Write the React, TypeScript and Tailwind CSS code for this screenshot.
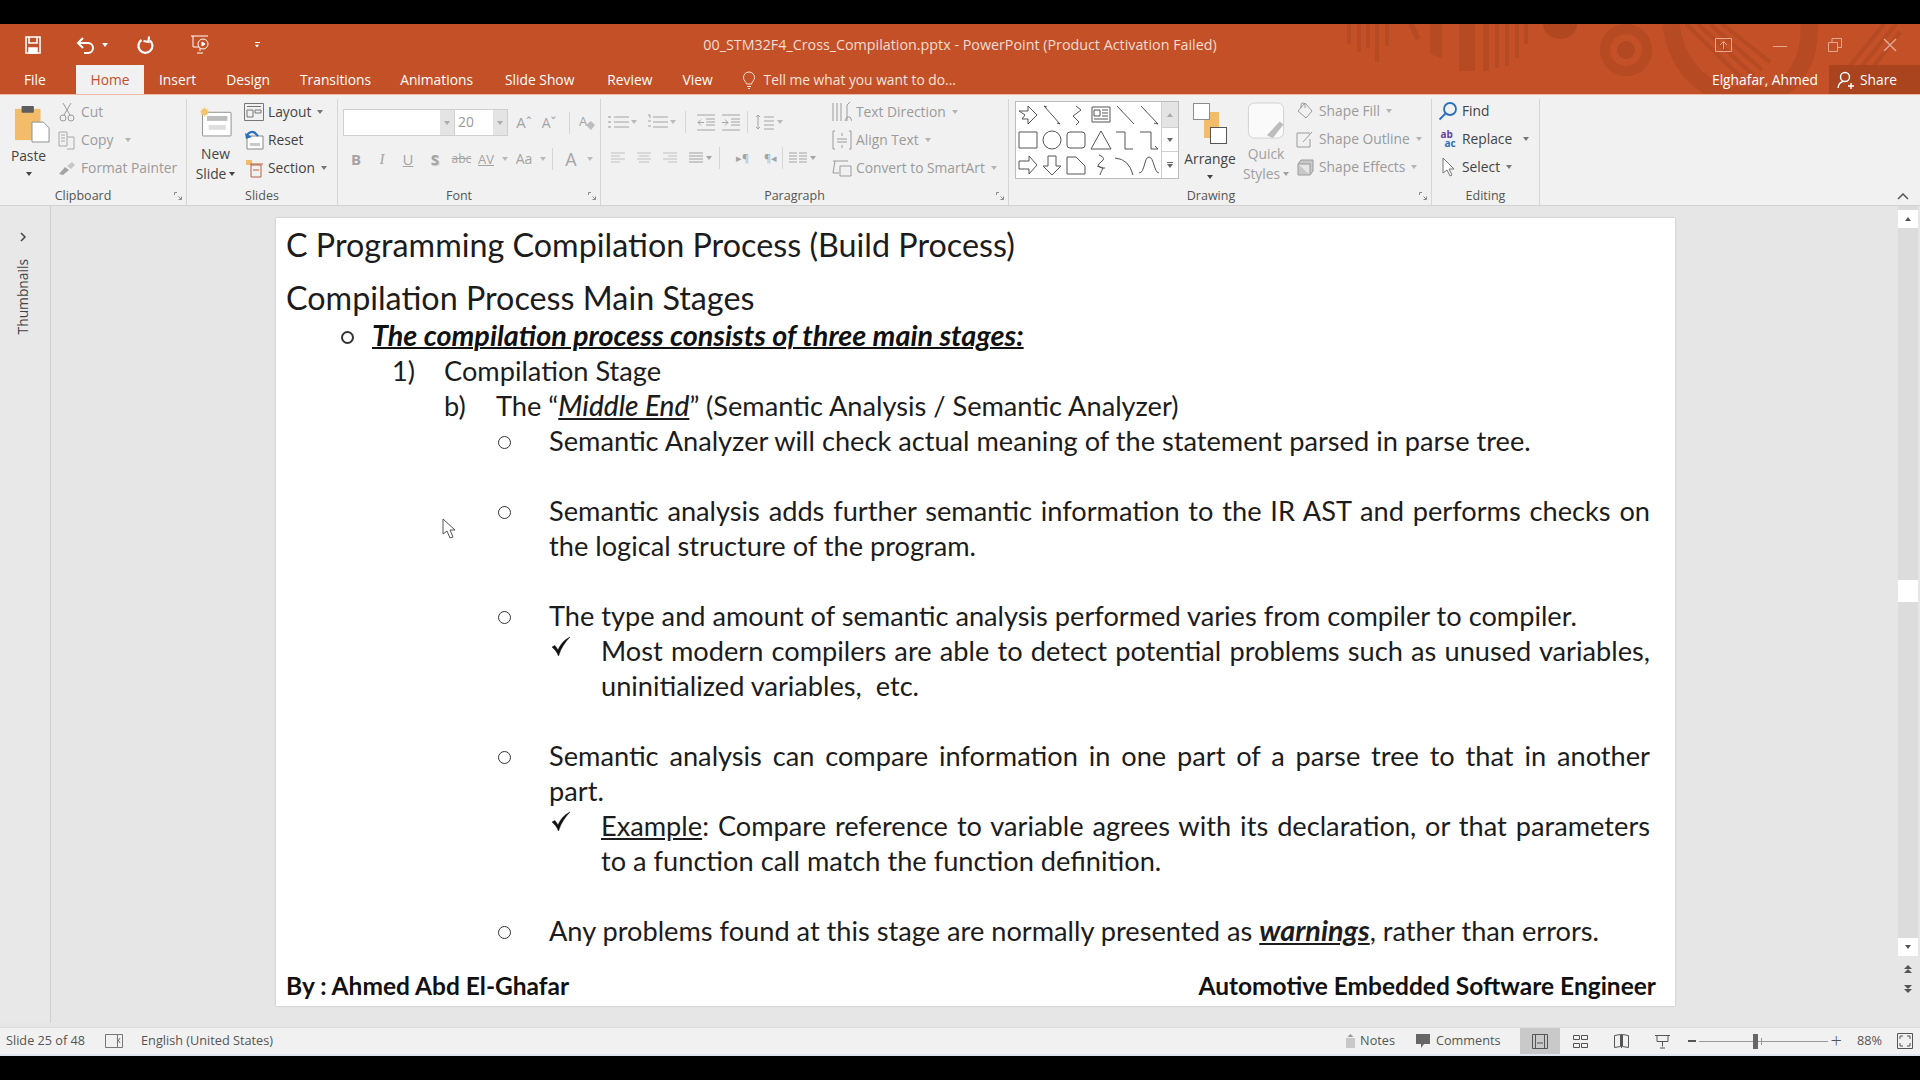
import type { ReactNode } from "react";

const uiFont = "font-['Open_Sans',sans-serif]";
const slideFont = "font-['Lato',sans-serif]";

const Caret = ({ className = "" }: { className?: string }) => (
  <svg width="6" height="4" viewBox="0 0 6 4" className={`shrink-0 ${className}`}>
    <path d="M0 0h6L3 4z" fill="currentColor" />
  </svg>
);

const Ico = ({ children, w = 18, h = 18, vb = "0 0 18 18", className = "" }: { children: ReactNode; w?: number; h?: number; vb?: string; className?: string }) => (
  <svg width={w} height={h} viewBox={vb} fill="none" stroke="currentColor" strokeWidth="1" className={`shrink-0 ${className}`}>
    {children}
  </svg>
);

const Launcher = () => (
  <svg width="8" height="8" viewBox="0 0 8 8" fill="none" stroke="#8a8a8a" strokeWidth="1">
    <path d="M.5 3V.5H3M7.5 7.5l-3-3M4.5 7.5h3v-3" />
  </svg>
);

// ribbon group with caption at the bottom
const Group = ({ label, width, launcher, captionPad = "", children }: { label: string; width: string; launcher?: boolean; captionPad?: string; children: ReactNode }) => (
  <div className={`${width} h-full shrink-0 flex flex-col border-r border-[#d6d6d6]`}>
    <div className="flex-1 flex min-h-0">{children}</div>
    <div className={`h-[21px] relative flex items-center justify-center text-[12.5px] text-[#555] pt-[4px] ${captionPad}`}>
      {label}
      {launcher && (
        <span className="absolute right-[4px] top-[8px] flex">
          <Launcher />
        </span>
      )}
    </div>
  </div>
);

const SmallBtn = ({ icon, label, caret, caretGap = "ml-[2px]", color = "text-[#9b9b9b]" }: { icon: ReactNode; label: string; caret?: boolean; caretGap?: string; color?: string }) => (
  <div className={`h-[28px] flex items-center gap-[4px] text-[13.8px] leading-none whitespace-nowrap ${color}`}>
    <span className="w-[20px] flex justify-center">{icon}</span>
    <span>{label}</span>
    {caret && <Caret className={`opacity-70 ${caretGap}`} />}
  </div>
);

const QuickAccess = () => (
  <div className="flex items-center text-white pl-[24px]">
    <Ico w={18} h={20} vb="0 0 18 20" className="stroke-[1.6]">
      <path d="M2 2h14v16H2zM5 2v6h8V2" />
      <path d="M5 13h8v5H5z" fill="white" />
    </Ico>
    <div className="flex items-center gap-[6px] ml-[34px]">
      <Ico w={20} h={18} vb="0 0 20 18" className="stroke-2">
        <path d="M7 2 2 7l5 5M2 7h10a5 5 0 0 1 0 10H8" />
      </Ico>
      <Caret />
    </div>
    <Ico w={20} h={20} vb="0 0 20 20" className="stroke-[2.2] ml-[27px]">
      <path d="M6.500 5a7 7 0 1 0 8.500.5" />
      <path d="M14 1.500l-.5 5.500-5-1" />
    </Ico>
    <Ico w={22} h={22} vb="0 0 22 22" className="ml-[34px]">
      <path d="M2 2h17M4 2v11h13M11 13v4M8 19h6" />
      <circle cx="14" cy="10" r="5" fill="#c35027" />
      <path d="M13 8l3 2-3 2z" fill="white" />
    </Ico>
    <div className="flex flex-col items-center ml-[43px] gap-[1px]">
      <div className="w-[5px] h-px bg-white" />
      <Caret className="scale-75" />
    </div>
  </div>
);

const TitlePattern = () => (
  <svg width="620" height="71" viewBox="0 0 620 71" className="absolute right-0 top-0 pointer-events-none" fill="none" stroke="#a9441f" strokeOpacity="0.5">
    <path d="M49 0v20M59 0v28M68 0v24M77 0v38M87 0v22" strokeWidth="4" />
    <path d="M111 0l7 15" strokeWidth="5" />
    <path d="M130 0h12v34l-12-4zM159 0h16v47h-16zM183 0h6v47h-6zM195 0h4v44h-4zM205 0h4v42h-4zM215 0h4v34h-4zM224 0h4v20h-4z" fill="#a9441f" fillOpacity="0.5" stroke="none" />
    <path d="M243 0a17 15 0 0 0 34 0z" fill="#a9441f" fillOpacity="0.75" stroke="none" />
    <circle cx="326" cy="26" r="21" strokeWidth="10" />
    <circle cx="326" cy="26" r="9" fill="#a9441f" fillOpacity="0.6" stroke="none" />
    <path d="M371 0c5 42 30 62 55 71h45c28-14 40-40 38-71" strokeWidth="17" />
    <path d="M386 0l58 56M398 0l56 52M410 0l52 46M422 0l48 38" strokeWidth="4" />
    <path d="M550 42l34-42M562 42l34-42M574 42l26-34" strokeWidth="4" />
  </svg>
);

const TitleBar = () => {
  const tabs: [string, string][] = [
    ["Insert", "ml-[15px]"],
    ["Design", "ml-[30px]"],
    ["Transitions", "ml-[30px]"],
    ["Animations", "ml-[29px]"],
    ["Slide Show", "ml-[32px]"],
    ["Review", "ml-[33px]"],
    ["View", "ml-[30px]"],
  ];
  return (
    <div className="h-[71px] relative bg-[#c35027] text-white overflow-hidden">
      <TitlePattern />
      <div className="h-[41px] relative grid grid-cols-[1fr_auto_1fr] items-center">
        <QuickAccess />
        <div className="text-[14.3px] text-[#f3dcd2] pt-[1px]">00_STM32F4_Cross_Compilation.pptx - PowerPoint (Product Activation Failed)</div>
        <div className="flex justify-end items-center gap-[41px] pr-[23px] text-[#e3a78f]">
          <Ico w={17} h={14} vb="0 0 17 14">
            <path d="M.5.5h16v13H.5zM5 7l3.500-3.500L12 7M8.500 4v7" />
          </Ico>
          <div className="w-[14px] h-px bg-[#e3a78f] mt-[4px]" />
          <Ico w={14} h={14} vb="0 0 14 14">
            <path d="M.5 4.500h9v9h-9zM4 4.500v-4h9.500v9h-4" />
          </Ico>
          <Ico w={14} h={14} vb="0 0 14 14" className="stroke-[1.5]">
            <path d="M1 1l12 12M13 1 1 13" />
          </Ico>
        </div>
      </div>
      <div className="h-[30px] relative flex items-stretch text-[13.8px]">
        <div className="w-[76px] flex items-center pl-[24px] pt-[1px]">File</div>
        <div className="w-[68px] flex items-center justify-center bg-[#f1f1f1] text-[#c35027]">Home</div>
        {tabs.map(([name, gap]) => (
          <div key={name} className={`flex items-center whitespace-nowrap ${gap}`}>
            {name}
          </div>
        ))}
        <div className="flex items-center ml-[29px] gap-[8px] text-[#f8e3da]">
          <Ico w={14} h={18} vb="0 0 14 18">
            <path d="M4.500 13C4 10.500 1.500 9.500 1.500 6.500a5.500 5.500 0 0 1 11 0C12.500 9.500 10 10.500 9.500 13zM5 15.500h4M6 17.500h2" />
          </Ico>
          <span>Tell me what you want to do...</span>
        </div>
        <div className="ml-auto flex items-center">
          <span className="mr-[11px]">Elghafar, Ahmed</span>
          <div className="w-[91px] h-full bg-[#a9441f] flex items-center gap-[6px] pl-[8px]">
            <Ico w={17} h={18} vb="0 0 17 18" className="stroke-[1.4]">
              <circle cx="8" cy="6" r="4.500" />
              <path d="M1 17c.5-3.500 2.500-6 5-6.500M11 15h6M14 12v6" />
            </Ico>
            <span>Share</span>
          </div>
        </div>
      </div>
      <div className="absolute left-0 right-0 bottom-0 h-px bg-[#eeb9a2]" />
    </div>
  );
};

const Shape = ({ d }: { d: string }) => (
  <div className="flex items-center justify-center">
    <svg width="24" height="24" viewBox="0 0 24 24" fill="none" stroke="#555" strokeWidth="1">
      <path d={d} />
    </svg>
  </div>
);

const shapes = [
  "M3 8h9V3l9 9-9 9v-5H6l3-4z",
  "M4 3l16 18M4 3l3 1M20 21l-3-1",
  "M12 3l5 4-8 6 6 6-3 3",
  "M3 4h18v15H3zM5 7h6v6H5zM13 7h6M13 10h6M13 13h6M5 16h14",
  "M4 3l17 18",
  "M4 3l17 18M21 21l-4-1",
  "M3 4h18v16H3z",
  "M3 12a9 9 0 1 0 18 0 9 9 0 1 0-18 0",
  "M6 4h12q3 0 3 3v10q0 3-3 3H6q-3 0-3-3V7q0-3 3-3z",
  "M12 3l10 18H2z",
  "M3 4h9v17h8",
  "M3 4h11v17h7M21 21l-3-3",
  "M3 8h10V3l8 9-8 9v-5H3z",
  "M8 3h8v10h5l-9 9-9-9h5z",
  "M3 4h9l9 9v8H3z",
  "M10 2q8 3 2 7-6 4 2 6-2 4-3 7M8 13q6 3 8 2",
  "M2 5q14 1 18 17",
  "M2 20C8 20 7 4 12 4s5 16 10 16",
];

const GrayIcon = ({ children, className = "" }: { children: ReactNode; className?: string }) => (
  <div className={`flex items-center justify-center text-[#a4a4a4] ${className}`}>{children}</div>
);

const Lines = ({ d, w = 18, h = 16 }: { d: string; w?: number; h?: number }) => (
  <svg width={w} height={h} viewBox={`0 0 ${w} ${h}`} fill="none" stroke="currentColor" strokeWidth="1">
    <path d={d} />
  </svg>
);

const Ribbon = () => (
  <div className="h-[111px] bg-[#f1f1f1] border-b border-[#d2d2d2] flex pt-[4px] relative">
    <Group label="Clipboard" width="w-[187px]" launcher captionPad="pr-[20px]">
      <div className="w-[57px] flex flex-col items-center pt-[6px] text-[#444] pl-[6px]">
        <svg width="36" height="38" viewBox="0 0 38 40">
          <rect x="1" y="4" width="27" height="33" fill="#f2bc6b" />
          <rect x="8" y="1" width="13" height="7" rx="1" fill="#5d5d5d" />
          <path d="M19 18h12l6 6v15H19z" fill="#fff" stroke="#8c8c8c" />
        </svg>
        <span className="text-[13.8px] leading-none mt-[6px] -ml-[6px]">Paste</span>
        <Caret className="mt-[9px] -ml-[6px]" />
      </div>
      <div className="-mt-[1px] flex flex-col">
        <SmallBtn
          label="Cut"
          icon={
            <Ico w={16} h={20} vb="0 0 16 20" className="text-[#9a9a9a]">
              <path d="M4 1l7 12M12 1 5 13" />
              <circle cx="4" cy="16" r="3" />
              <circle cx="12" cy="16" r="3" />
            </Ico>
          }
        />
        <SmallBtn
          label="Copy"
          caret
          caretGap="ml-[8px]"
          icon={
            <Ico w={18} h={20} vb="0 0 18 20" className="text-[#a8a8a8]">
              <path d="M1 2h8v14H1zM3 5h4M3 8h4M3 11h4M9 7h7v12H9" />
            </Ico>
          }
        />
        <SmallBtn
          label="Format Painter"
          icon={
            <svg width="18" height="16" viewBox="0 0 18 16">
              <path d="M1 14l6-7 4 3-6 5z" fill="#a4a4a4" />
              <path d="M9 6l5-4 3 3-4 4z" fill="#c8c8c8" />
            </svg>
          }
        />
      </div>
    </Group>

    <Group label="Slides" width="w-[151px]">
      <div className="w-[57px] flex flex-col items-center pt-[8px] text-[#444] text-[13.8px] leading-[20px]">
        <svg width="40" height="38" viewBox="0 0 40 38" className="mb-[6px]">
          <rect x="3.500" y="6.500" width="35" height="29" rx="1" fill="#fff" stroke="#7c7c7c" />
          <rect x="9" y="11" width="25" height="6" fill="#bdbdbd" />
          <rect x="11" y="22" width="21" height="6" fill="#dedede" />
          <circle cx="6" cy="6" r="4" fill="#f4c36b" />
          <path d="M6 0v12M0 6h12M2 2l8 8M10 2l-8 8" stroke="#f4c36b" />
        </svg>
        <span>New</span>
        <span className="flex items-center gap-[3px]">
          Slide <Caret />
        </span>
      </div>
      <div className="-mt-[1px] flex flex-col text-[#444]">
        <SmallBtn
          label="Layout"
          caret
          color="text-[#444]"
          icon={
            <Ico w={20} h={18} vb="0 0 20 18" className="text-[#777]">
              <path d="M.5.5h19v17H.5zM3 3.500h14M3 7h6v7H3zM11 7h6v3h-6z" />
            </Ico>
          }
        />
        <SmallBtn
          label="Reset"
          color="text-[#444]"
          icon={
            <svg width="20" height="20" viewBox="0 0 20 20" fill="none">
              <path d="M3 6h16v13H3z" fill="#fff" stroke="#888" />
              <path d="M3 7a5 5 0 0 1 9-3l2 2" stroke="#2a6fbe" strokeWidth="2.200" />
              <path d="M1 3l1 6 6-2z" fill="#2a6fbe" />
              <path d="M6 13h10v3H6z" fill="#c9c9c9" />
            </svg>
          }
        />
        <SmallBtn
          label="Section"
          caret
          color="text-[#444]"
          icon={
            <svg width="20" height="20" viewBox="0 0 20 20" fill="none">
              <path d="M2 2h6v5H2z" fill="#f2bc6b" />
              <path d="M6 6h13M7 7h10v12H7zM9 12h6" stroke="#b5603d" />
            </svg>
          }
        />
      </div>
    </Group>

    <Group label="Font" width="w-[263px]" launcher captionPad="pr-[20px]">
      <div className="flex flex-col pl-[5px] pt-[10px]">
        <div className="flex items-center h-[27px]">
          <div className="w-[111px] h-full border border-[#d0d0d0] border-r-0 bg-white flex justify-end">
            <div className="w-[14px] h-full bg-[#e4e4e4] flex items-center justify-center text-[#aaa]">
              <Caret />
            </div>
          </div>
          <div className="w-[54px] h-full border border-[#d0d0d0] bg-white flex items-center justify-between text-[13.8px] text-[#999] pl-[3px]">
            20
            <div className="w-[14px] h-full bg-[#e4e4e4] flex items-center justify-center text-[#aaa]">
              <Caret />
            </div>
          </div>
          <GrayIcon className="w-[26px] ml-[3px] text-[15px]">Aˆ</GrayIcon>
          <GrayIcon className="w-[24px] text-[14px]">Aˇ</GrayIcon>
          <div className="w-px h-[22px] bg-[#d6d6d6] mx-[8px]" />
          <GrayIcon>
            <svg width="18" height="18" viewBox="0 0 18 18">
              <text x="1" y="12" fontSize="13" fill="#a4a4a4" fontFamily="Open Sans">A</text>
              <path d="M8 11l5-4 4 4-4 5z" fill="#bdbdbd" />
            </svg>
          </GrayIcon>
        </div>
        <div className="flex items-center h-[24px] mt-[11px] text-[#a4a4a4] text-[15px] leading-none">
          <div className="w-[26px] text-center font-bold">B</div>
          <div className="w-[26px] text-center italic font-['Liberation_Serif',serif]">I</div>
          <div className="w-[26px] text-center underline">U</div>
          <div className="w-[28px] text-center font-bold [text-shadow:1px_1px_1px_#c8c8c8]">S</div>
          <div className="w-[25px] text-center text-[12px] line-through">abc</div>
          <div className="w-[24px] text-center text-[13px] underline">AV</div>
          <Caret className="ml-[4px] mr-[4px] opacity-70" />
          <div className="w-[24px] text-center text-[14px]">Aa</div>
          <Caret className="ml-[4px] opacity-70" />
          <div className="w-px h-[22px] bg-[#d6d6d6] ml-[6px] mr-[10px]" />
          <div className="w-[16px] text-center text-[18px]">A</div>
          <Caret className="ml-[8px] opacity-70" />
        </div>
      </div>
    </Group>

    <Group label="Paragraph" width="w-[408px]" launcher captionPad="pr-[20px]">
      <div className="w-[231px] pl-[7px] pt-[10px] flex flex-col">
        <div className="flex items-center h-[26px] text-[#a4a4a4]">
          <Lines w={22} h={16} d="M6 3h15M6 8h15M6 13h15M1 2v2M1 7v2M1 12v2M2 2v2M2 7v2M2 12v2" />
          <Caret className="ml-[1px] opacity-70" />
          <div className="w-[10px]" />
          <Lines w={22} h={16} d="M6 3h15M6 8h15M6 13h15M1 1h2v3M1 7h3M1 12h3" />
          <Caret className="ml-[1px] opacity-70" />
          <div className="w-px h-[22px] bg-[#d6d6d6] ml-[9px] mr-[10px]" />
          <Lines w={20} h={17} d="M1 1h18M1 16h18M10 5h9M10 8h9M10 11h9M8 8.500H2M5 5.500l-3 3 3 3" />
          <div className="w-[5px]" />
          <Lines w={20} h={17} d="M1 1h18M1 16h18M10 5h9M10 8h9M10 11h9M1 8.500h6M4 5.500l3 3-3 3" />
          <div className="w-px h-[22px] bg-[#d6d6d6] ml-[6px] mr-[7px]" />
          <Lines w={20} h={18} d="M9 4h10M9 8h10M9 12h10M9 16h10M3 2v14M1 4l2-2 2 2M1 14l2 2 2-2" />
          <Caret className="ml-[2px] opacity-70" />
        </div>
        <div className="flex items-center h-[24px] mt-[11px] text-[#c0c0c0] pl-[2px]">
          <Lines w={16} h={14} d="M1 2h14M1 5h9M1 8h14M1 11h9" />
          <div className="w-[10px]" />
          <Lines w={16} h={14} d="M1 2h14M3 5h10M1 8h14M3 11h10" />
          <div className="w-[10px]" />
          <Lines w={16} h={14} d="M1 2h14M6 5h9M1 8h14M6 11h9" />
          <div className="w-[10px]" />
          <span className="text-[#a0a0a0] flex">
            <Lines w={16} h={14} d="M1 2h14M1 5h14M1 8h14M1 11h14" />
          </span>
          <Caret className="ml-[2px] text-[#a4a4a4]" />
          <div className="w-px h-[22px] bg-[#d6d6d6] ml-[7px] mr-[16px]" />
          <span className="text-[11px] text-[#a4a4a4] w-[18px]">▸¶</span>
          <span className="text-[11px] text-[#a4a4a4] w-[18px] ml-[10px]">¶◂</span>
          <div className="w-px h-[22px] bg-[#d6d6d6] mr-[3px]" />
          <span className="text-[#a4a4a4] flex ml-[2px]">
            <Lines w={20} h={14} d="M1 2h8M11 2h8M1 5h8M11 5h8M1 8h8M11 8h8M1 11h8M11 11h8" />
          </span>
          <Caret className="ml-[2px] text-[#a4a4a4]" />
        </div>
      </div>
      <div className="flex flex-col -mt-[1px]">
        <SmallBtn
          label="Text Direction"
          caret
          icon={
            <Lines w={20} h={22} d="M1 2v18M5 2v18M9 2v18M15 20V4l3-3M13 20l2-4h3l2 4" />
          }
        />
        <SmallBtn
          label="Align Text"
          caret
          icon={
            <Lines w={20} h={20} d="M3 1H1v18h2M17 1h2v18h-2M5 9h10M5 12h10M10 3v3M10 15v3" />
          }
        />
        <SmallBtn
          label="Convert to SmartArt"
          caret
          icon={
            <Lines w={20} h={18} d="M1 2h15M3 2l-2 12h6M8 7h11v10H8z" />
          }
        />
      </div>
    </Group>

    <Group label="Drawing" width="w-[423px]" launcher captionPad="pr-[18px]">
      <div className="pl-[6px] pt-[2px]">
        <div className="w-[164px] h-[78px] flex border border-[#bdbdbd] bg-white">
          <div className="flex-1 grid grid-cols-6 grid-rows-3">
            {shapes.map((d) => (
              <Shape key={d} d={d} />
            ))}
          </div>
          <div className="w-[17px] border-l border-[#cfcfcf] flex flex-col text-[#666] bg-[#f4f4f4]">
            <div className="h-[25px] flex items-center justify-center bg-[#e4e4e4] text-[#aaa]">
              <Caret className="rotate-180" />
            </div>
            <div className="h-[25px] flex items-center justify-center bg-white border-y border-[#cfcfcf]">
              <Caret />
            </div>
            <div className="flex-1 flex flex-col items-center justify-center gap-[1px] bg-white">
              <div className="w-[6px] h-px bg-[#666]" />
              <Caret />
            </div>
          </div>
        </div>
      </div>
      <div className="w-[58px] ml-[2px] flex flex-col items-center pt-[3px] text-[13.8px] leading-none text-[#444]">
        <svg width="36" height="44" viewBox="0 0 36 44" className="mb-[6px]">
          <rect x="12" y="10" width="15" height="26" fill="#f2bc6b" />
          <rect x="1.500" y="1.500" width="16" height="16" fill="#fff" stroke="#8c8c8c" />
          <rect x="18.500" y="25.500" width="16" height="16" fill="#fff" stroke="#555" />
        </svg>
        <span>Arrange</span>
        <Caret className="mt-[9px]" />
      </div>
      <div className="w-[54px] flex flex-col items-center pt-[3px] text-[13.8px] leading-[20px] text-[#a0a0a0]">
        <svg width="38" height="40" viewBox="0 0 38 40" fill="none" className="mb-[3px]">
          <rect x="1" y="1" width="36" height="36" rx="6" fill="#fafafa" stroke="#d2d2d2" />
          <path d="M20 34 33 20l4 3-11 14z" fill="#bdbdbd" />
        </svg>
        <span>Quick</span>
        <span className="flex items-center gap-[3px]">
          Styles <Caret />
        </span>
      </div>
      <div className="flex flex-col ml-[2px] -mt-[2px]">
        <SmallBtn
          label="Shape Fill"
          caret
          icon={
            <Lines w={18} h={18} d="M9 1l7 8-6 7-8-7zM5 6V3a2 2 0 0 1 4 0v3" />
          }
        />
        <SmallBtn
          label="Shape Outline"
          caret
          icon={
            <Lines w={18} h={18} d="M14 3H1v14h13V9M7 12l9-10" />
          }
        />
        <SmallBtn
          label="Shape Effects"
          caret
          icon={
            <svg width="18" height="18" viewBox="0 0 18 18">
              <path d="M5 2h12v11l-3 4H2V6z" fill="#c8c8c8" stroke="#9a9a9a" />
              <path d="M2 6h12v11" fill="#e6e6e6" stroke="#9a9a9a" />
            </svg>
          }
        />
      </div>
    </Group>

    <Group label="Editing" width="w-[108px]">
      <div className="flex flex-col pl-[6px] -mt-[2px]">
        <SmallBtn
          label="Find"
          color="text-[#444]"
          icon={
            <svg width="20" height="20" viewBox="0 0 20 20" fill="none" stroke="#2a6fbe" strokeWidth="1.800">
              <circle cx="12" cy="8" r="6" />
              <path d="M7.500 12.500 1.500 18.500" />
            </svg>
          }
        />
        <SmallBtn
          label="Replace"
          caret
          caretGap="ml-[7px]"
          color="text-[#444]"
          icon={
            <div className="text-[10px] leading-[9px] font-bold">
              <div className="text-[#6b3fa0]">ab</div>
              <div className="text-[#2a6fbe] pl-[4px]">ac</div>
            </div>
          }
        />
        <SmallBtn
          label="Select"
          caret
          color="text-[#444]"
          icon={
            <svg width="14" height="20" viewBox="0 0 14 20" fill="#fff" stroke="#777">
              <path d="M2 1v15l4-3 3 6 2-1-3-6h5z" />
            </svg>
          }
        />
      </div>
    </Group>

    <div className="absolute right-[11px] bottom-[5px] text-[#555]">
      <svg width="12" height="7" viewBox="0 0 12 7" fill="none" stroke="currentColor" strokeWidth="1.500">
        <path d="M1 6l5-5 5 5" />
      </svg>
    </div>
  </div>
);

// plain text row of the slide, 35px like in the PowerPoint outline
const Row = ({ className = "", children }: { className?: string; children?: ReactNode }) => (
  <div className={`min-h-[35px] leading-[35px] ${className}`}>{children}</div>
);

const Bullet = ({ children }: { children: ReactNode }) => (
  <div className="flex pl-[222px] pr-[25px]">
    <div className="w-[51px] shrink-0 flex items-start">
      <span className="w-[13px] h-[13px] border-[1.5px] border-[#333] rounded-full mt-[13px]" />
    </div>
    <div className="flex-1 text-justify leading-[35px]">{children}</div>
  </div>
);

const Check = ({ children }: { children: ReactNode }) => (
  <div className="flex pl-[275px] pr-[25px]">
    <div className="w-[50px] shrink-0 pt-[3px]">
      <svg width="20" height="21" viewBox="0 0 20 21">
        <path d="M1 11l3-1.500 3 4.500C9 9 13 4 19 1 14 6 10 12 7.500 20 6 16 3.500 13 1 11z" fill="#111" stroke="#111" strokeWidth="0.500" />
      </svg>
    </div>
    <div className="flex-1 text-justify leading-[35px]">{children}</div>
  </div>
);

const Slide = () => (
  <div className={`w-[1399px] h-[788px] bg-white shadow-[0_0_2px_#bbb] flex flex-col pt-[7px] text-[#1c1c1c] text-[27.2px] ${slideFont}`}>
    <div className="pl-[10px] text-[32.3px] leading-[40px]">C Programming Compilation Process (Build Process)</div>
    <div className="pl-[10px] text-[32.3px] leading-[40px] mt-[13px]">Compilation Process Main Stages</div>
    <Row className="pl-[65px] flex items-start">
      <span className="w-[13px] h-[13px] border-2 border-[#333] rounded-full mt-[13px] mr-[18px] shrink-0" />
      <span className="text-[28.8px] font-bold italic underline decoration-2 text-[#111]">The compilation process consists of three main stages:</span>
    </Row>
    <Row className="pl-[116px] flex">
      <span className="w-[52px]">1)</span>
      <span>Compilation Stage</span>
    </Row>
    <Row className="pl-[168px] flex">
      <span className="w-[52px]">b)</span>
      <span>
        The “<span className="italic underline font-medium text-[28px]">Middle End</span>” (Semantic Analysis / Semantic Analyzer)
      </span>
    </Row>
    <Bullet>Semantic Analyzer will check actual meaning of the statement parsed in parse tree.</Bullet>
    <Row />
    <Bullet>Semantic analysis adds further semantic information to the IR AST and performs checks on the logical structure of the program.</Bullet>
    <Row />
    <Bullet>The type and amount of semantic analysis performed varies from compiler to compiler.</Bullet>
    <Check>Most modern compilers are able to detect potential problems such as unused variables, uninitialized variables,&nbsp; etc.</Check>
    <Row />
    <Bullet>Semantic analysis can compare information in one part of a parse tree to that in another part.</Bullet>
    <Check>
      <span className="underline">Example</span>: Compare reference to variable agrees with its declaration, or that parameters to a function call match the function definition.
    </Check>
    <Row />
    <Bullet>
      Any problems found at this stage are normally presented as <span className="text-[28.8px] font-bold italic underline">warnings</span>, rather than errors.
    </Bullet>
    <div className="mt-auto flex justify-between pl-[10px] pr-[19px] pb-[3px] font-bold text-[24.5px] text-[#111] leading-[35px]">
      <span>By : Ahmed Abd El-Ghafar</span>
      <span>Automotive Embedded Software Engineer</span>
    </div>
  </div>
);

const ScrollBar = () => (
  <div className="w-[20px] mr-[2px] flex flex-col items-center text-[#555] bg-[#dcdcdc] pt-[4px] h-full">
    <div className="w-full h-[18px] bg-white flex items-center justify-center">
      <Caret className="rotate-180" />
    </div>
    <div className="flex-1 w-full pt-[352px]">
      <div className="w-full h-[22px] bg-white" />
    </div>
    <div className="w-full h-[18px] bg-white flex items-center justify-center">
      <Caret />
    </div>
    <div className="w-full bg-[#e6e6e6] flex flex-col items-center pt-[9px] gap-[11px] pb-[33px]">
      <svg width="10" height="9" viewBox="0 0 10 9" fill="currentColor">
        <path d="M5 0l4 4H1zM5 4l4 4H1z" />
      </svg>
      <svg width="10" height="9" viewBox="0 0 10 9" fill="currentColor">
        <path d="M1 0h8L5 4zM1 4h8L5 8z" />
      </svg>
    </div>
  </div>
);

const Workspace = () => (
  <div className="h-[821px] bg-[#e6e6e6] flex relative">
    <div className="w-[51px] border-r border-[#cfcfcf] h-[817px] flex flex-col items-center pt-[26px] pr-[3px] text-[#444] bg-[#e8e8e8]">
      <svg width="7" height="10" viewBox="0 0 7 10" fill="none" stroke="currentColor" strokeWidth="1.500">
        <path d="M1 1l4 4-4 4" />
      </svg>
      <div className={`mt-[17px] text-[13.8px] [writing-mode:vertical-rl] rotate-180 ${uiFont}`}>Thumbnails</div>
    </div>
    <div className="w-[225px]" />
    <div className="pt-[12px]">
      <Slide />
    </div>
    <div className="flex-1" />
    <ScrollBar />
    {/* mouse pointer over the slide */}
    <svg width="14" height="22" viewBox="0 0 14 22" className="absolute left-[442px] top-[312px]" fill="#fff" stroke="#555">
      <path d="M1 1v15l4-3 3 7 3-1-3-7h5z" />
    </svg>
  </div>
);

const StatusBar = () => (
  <div className="h-[29px] bg-[#f1f1f1] border-t border-[#dcdcdc] flex items-center text-[12.7px] text-[#555] border-b-2 border-b-[#dfe6ee]">
    <span className="ml-[6px]">Slide 25 of 48</span>
    <svg width="18" height="15" viewBox="0 0 18 15" fill="none" stroke="#777" className="ml-[20px]">
      <path d="M.5.5h12v13H.5zM9 .5h8.500v13H9M12 4l3 5M15 4l-3 5" />
    </svg>
    <span className="ml-[18px]">English (United States)</span>
    <div className="ml-auto flex items-center h-full">
      <svg width="13" height="14" viewBox="0 0 13 14" className="mr-[3px]">
        <path d="M2 4h9v10H2z" fill="#c8c8c8" />
        <path d="M6.500 0l3 3h-6z" fill="#999" />
      </svg>
      <span>Notes</span>
      <svg width="16" height="16" viewBox="0 0 16 16" className="ml-[20px] mr-[5px]">
        <path d="M1 1h14v10H9l-3 4v-4H1z" fill="#666" />
      </svg>
      <span>Comments</span>
      <div className="w-[40px] h-full bg-[#c9c9c9] flex items-center justify-center ml-[19px]">
        <Lines w={16} h={15} d="M.5.500h15v14H.5zM3.500.500v14M12.500.500v14M5 9h6" />
      </div>
      <div className="w-[41px] flex justify-center">
        <Lines w={15} h={13} d="M.5.500h6v4h-6zM8.500.500h6v4h-6zM.5 8.500h6v4h-6zM8.500 8.500h6v4h-6z" />
      </div>
      <div className="w-[41px] flex justify-center">
        <Lines w={15} h={14} d="M.5 1.500l6-1v12l-6 1zM14.500 1.500l-6-1v12l6 1zM7.500 0v14" />
      </div>
      <div className="w-[41px] flex justify-center">
        <Lines w={15} h={15} d="M0 1.500h15M2 1.500v6h11v-6M7.500 7.500v5M5 14h5" />
      </div>
      <div className="w-[8px] h-[2px] bg-[#555] ml-[5px]" />
      <div className="w-[129px] h-px bg-[#999] relative mx-[3px]">
        <div className="absolute left-[54px] -top-[7px] w-[5px] h-[15px] bg-[#666]" />
        <div className="absolute left-[62px] -top-[3px] w-px h-[7px] bg-[#999]" />
      </div>
      <div className="text-[20px] leading-none font-light mr-[15px]">+</div>
      <span>88%</span>
      <div className="ml-[15px] mr-[7px] flex">
        <Lines w={16} h={16} d="M.5.500h15v15H.5zM3 6V3h3M13 6V3h-3M3 10v3h3M13 10v3h-3" />
      </div>
    </div>
  </div>
);

const App = () => {
  return (
    <div className={`w-[1920px] h-[1080px] bg-black overflow-hidden pt-[24px] ${uiFont}`}>
      <TitleBar />
      <Ribbon />
      <Workspace />
      <StatusBar />
    </div>
  );
};

export default App;
